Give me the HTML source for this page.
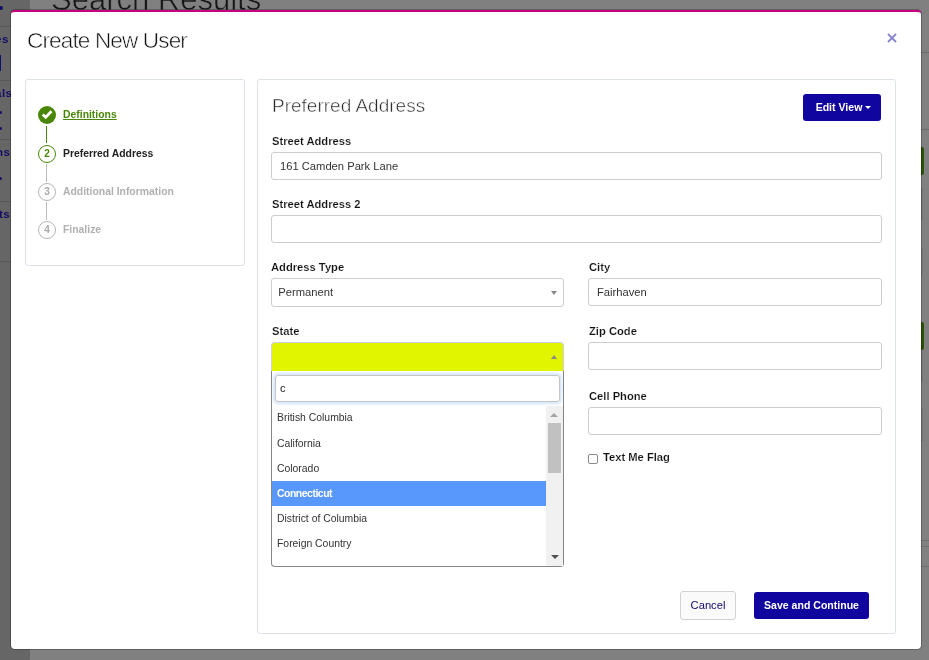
<!DOCTYPE html>
<html>
<head>
<meta charset="utf-8">
<title>Create New User</title>
<style>
*{box-sizing:border-box;margin:0;padding:0}
html,body{width:929px;height:660px;overflow:hidden}
body{font-family:"Liberation Sans",sans-serif;font-size:12px;color:#212529;background:#808080;position:relative}
.abs{position:absolute}
/* background page */
#side{left:0;top:0;width:30px;height:660px;background:#666}
#side .ln{position:absolute;left:0;width:30px;height:1px;background:#595959}
#side .t{position:absolute;color:#120c64;font-size:11.5px;font-weight:bold;white-space:nowrap;letter-spacing:0.5px}
#bgtitle{left:51px;top:-18px;font-size:31px;color:#151515;white-space:nowrap;letter-spacing:0px;-webkit-text-stroke:0.6px #808080}
/* modal */
#modal{left:11px;top:10px;width:910px;height:639px;background:#fff;border-radius:4px;border-top:2px solid #c8007f;box-shadow:0 0 0 1px rgba(0,0,0,.25)}
#mtitle{left:27px;top:28px;font-size:22.5px;color:#111;white-space:nowrap;line-height:26px;letter-spacing:-0.84px;-webkit-text-stroke:0.55px #fff}
#close{left:885.5px;top:29.6px;width:12px;height:16px}
.card{border:1px solid #dde1e8;border-radius:3px;background:#fff}
#lcard{left:25px;top:79px;width:220px;height:187px}
#rcard{left:257px;top:79px;width:639px;height:555px}
/* steps */
.circ{position:absolute;width:18px;height:18px;border-radius:50%;border:1px solid #b5b5b5;font-size:10px;font-weight:bold;color:#aaa;text-align:center;line-height:16px;background:#fff}
.circ.on{border:1.5px solid #4a8708;color:#4a8708;line-height:15px}
.circ.done{background:#4a8708;border:none}
.vln{position:absolute;width:1px;background:#bbb}
.stp{position:absolute;font-size:10.4px;font-weight:bold;white-space:nowrap;line-height:14px}
/* form */
.lbl{position:absolute;font-size:11.2px;font-weight:bold;color:#111;-webkit-text-stroke:0.17px #fff;white-space:nowrap;line-height:14px}
.inp{position:absolute;height:28px;border:1px solid #cdcdcd;border-radius:3px;background:#fff;font-size:11.2px;line-height:26px;padding-left:8px;color:#333;white-space:nowrap}
.btn{position:absolute;border-radius:3px;font-size:10.55px;font-weight:bold;text-align:center;white-space:nowrap}
.navy{background:#10069f;color:#fff}
#h2{left:272px;top:93.5px;font-size:19px;color:#2a2a2a;line-height:24px;white-space:nowrap;-webkit-text-stroke:0.5px #fff}
/* dropdown */
#dd{left:271px;top:371px;width:293px;height:196px;border:1px solid #858585;border-top:none;border-radius:0 0 4px 4px;background:#fff}
.opt{position:absolute;left:272px;width:274px;height:25px;font-size:10.4px;line-height:26px;padding-left:5px;color:#333;white-space:nowrap}
.opt.hl{background:#5897fb;color:#fff;font-weight:bold;letter-spacing:-0.45px}
</style>
</head>
<body><div id="wrap" style="position:absolute;left:0;top:0;width:929px;height:660px;will-change:transform">
<!-- dimmed background page -->
<div class="abs" id="bgtitle">Search Results</div>
<div class="abs" id="side">
  <div class="ln" style="top:26px"></div>
  <div class="ln" style="top:80px"></div>
  <div class="ln" style="top:139px"></div>
  <div class="ln" style="top:201px"></div>
  <div class="ln" style="top:261px"></div>
  <div class="t" style="left:-5px;top:33px">es</div>
  <div class="t" style="left:-5px;top:87px">als</div>
  <div class="t" style="left:-4px;top:146px">ns</div>
  <div class="t" style="left:-1px;top:208px">ts</div>
  <div class="abs" style="left:0;top:55px;width:1px;height:16px;background:#14106a"></div>
  <div class="abs" style="left:-2px;top:6px;width:5px;height:4px;border-radius:2px;background:#14106a"></div>
  <div class="abs" style="left:-1px;top:111px;width:3px;height:3px;border-radius:2px;background:#14106a"></div>
  <div class="abs" style="left:-1px;top:127px;width:3px;height:3px;border-radius:2px;background:#14106a"></div>
  <div class="abs" style="left:-1px;top:177px;width:3px;height:3px;border-radius:2px;background:#14106a"></div>
</div>
<!-- right strip of dimmed page -->
<div class="abs" style="left:921px;top:52px;width:8px;height:1px;background:#6a6a6a"></div>
<div class="abs" style="left:921px;top:129px;width:8px;height:1px;background:#6a6a6a"></div>
<div class="abs" style="left:919px;top:147px;width:5px;height:28px;border-radius:2px;background:#2c5208"></div>
<div class="abs" style="left:919px;top:188px;width:4px;height:32px;background:#747474"></div>
<div class="abs" style="left:919px;top:249px;width:4px;height:26px;border:1px solid #727272"></div>
<div class="abs" style="left:919px;top:322px;width:5px;height:28px;border-radius:2px;background:#2c5208"></div>
<div class="abs" style="left:919px;top:351px;width:4px;height:31px;background:#747474"></div>
<div class="abs" style="left:919px;top:409px;width:4px;height:32px;border:1px solid #727272"></div>
<div class="abs" style="left:921px;top:540px;width:8px;height:1px;background:#6f6f6f"></div>
<div class="abs" style="left:921px;top:546px;width:8px;height:1px;background:#6f6f6f"></div>
<div class="abs" style="left:921px;top:566px;width:8px;height:1px;background:#6f6f6f"></div>

<!-- modal -->
<div class="abs" id="modal"></div>
<div class="abs" id="mtitle">Create New User</div>
<svg class="abs" id="close" viewBox="0 0 12 16"><path d="M2 4 L10 12 M10 4 L2 12" stroke="#8a86d0" stroke-width="1.9" fill="none"/></svg>

<div class="abs card" id="lcard"></div>
<div class="abs card" id="rcard"></div>

<!-- steps -->
<div class="vln" style="left:46px;top:126px;height:17px;background:#4a8708;width:1px"></div>
<div class="vln" style="left:46px;top:164px;height:18px"></div>
<div class="vln" style="left:46px;top:202px;height:18px"></div>
<div class="circ done" style="left:38px;top:106px"><svg width="18" height="18" viewBox="0 0 18 18" style="display:block"><path d="M4.7 8.5 L7.7 11.3 L13.5 5.2" stroke="#fff" stroke-width="2.7" fill="none"/></svg></div>
<div class="circ on" style="left:38px;top:144.5px">2</div>
<div class="circ" style="left:38px;top:183px">3</div>
<div class="circ" style="left:38px;top:221px">4</div>
<div class="stp" style="left:63px;top:108px;color:#4a8708;text-decoration:underline">Definitions</div>
<div class="stp" style="left:63px;top:147px;color:#222">Preferred Address</div>
<div class="stp" style="left:63px;top:185px;color:#b0b0b0">Additional Information</div>
<div class="stp" style="left:63px;top:223px;color:#b0b0b0">Finalize</div>

<!-- form -->
<div class="abs" id="h2">Preferred Address</div>
<div class="btn navy" style="left:803px;top:94px;width:78px;height:27px;line-height:27px;padding-left:3px">Edit View<span style="display:inline-block;width:0;height:0;border-left:3px solid transparent;border-right:3px solid transparent;border-top:3px solid #fff;margin-left:3px;vertical-align:2px"></span></div>

<div class="lbl" style="left:272px;top:134px">Street Address</div>
<div class="inp" style="left:271px;top:152px;width:611px">161 Camden Park Lane</div>
<div class="lbl" style="left:272px;top:197px">Street Address 2</div>
<div class="inp" style="left:271px;top:215px;width:611px"></div>

<div class="lbl" style="left:271px;top:260px">Address Type</div>
<div class="inp" style="left:271px;top:278px;width:293px;height:29px;padding-left:6.3px;line-height:27px">Permanent<span style="position:absolute;right:6px;top:12px;width:0;height:0;border-left:3px solid transparent;border-right:3px solid transparent;border-top:4px solid #888"></span></div>
<div class="lbl" style="left:589px;top:260px">City</div>
<div class="inp" style="left:588px;top:278px;width:294px">Fairhaven</div>

<div class="lbl" style="left:272px;top:324px">State</div>
<div class="abs" style="left:271px;top:342px;width:293px;height:30px;background:#e2f500;border:1px solid #cfcfe4;border-bottom:none;border-radius:4px 4px 0 0"><span style="position:absolute;right:6px;top:12px;width:0;height:0;border-left:3px solid transparent;border-right:3px solid transparent;border-bottom:4px solid #888"></span></div>
<div class="abs" id="dd"></div>
<div class="abs" style="left:275px;top:375px;width:285px;height:27px;border:1px solid #c4c4c4;border-radius:3px;box-shadow:0 0 3px 2px rgba(120,175,240,.32);font-size:11.2px;line-height:24px;padding-left:3.9px;color:#222">c</div>
<div class="opt" style="top:405px">British Columbia</div>
<div class="opt" style="top:431px">California</div>
<div class="opt" style="top:456px">Colorado</div>
<div class="opt hl" style="top:481px">Connecticut</div>
<div class="opt" style="top:506px">District of Columbia</div>
<div class="opt" style="top:531px">Foreign Country</div>
<!-- scrollbar -->
<div class="abs" style="left:546px;top:406px;width:17px;height:160px;background:#f1f1f1"></div>
<div class="abs" style="left:548px;top:423px;width:13px;height:50px;background:#c1c1c1"></div>
<div class="abs" style="left:550.4px;top:412.5px;width:0;height:0;border-left:4px solid transparent;border-right:4px solid transparent;border-bottom:4.3px solid #a3a3a3"></div>
<div class="abs" style="left:551px;top:555px;width:0;height:0;border-left:4px solid transparent;border-right:4px solid transparent;border-top:4px solid #505050"></div>

<div class="lbl" style="left:589px;top:324px">Zip Code</div>
<div class="inp" style="left:588px;top:342px;width:294px"></div>
<div class="lbl" style="left:589px;top:389px">Cell Phone</div>
<div class="inp" style="left:588px;top:407px;width:294px"></div>
<div class="abs" style="left:588px;top:454px;width:10px;height:10px;border:1px solid #8a8a8a;border-radius:2px;background:#fff"></div>
<div class="lbl" style="left:603px;top:450px">Text Me Flag</div>

<div class="btn" style="left:680px;top:591px;width:56px;height:29px;line-height:27px;border:1px solid #d2d2d2;background:#fafafa;color:#10066e;font-weight:normal;font-size:11.2px">Cancel</div>
<div class="btn navy" style="left:754px;top:592px;width:115px;height:27px;line-height:27px">Save and Continue</div>
</div></body>
</html>
